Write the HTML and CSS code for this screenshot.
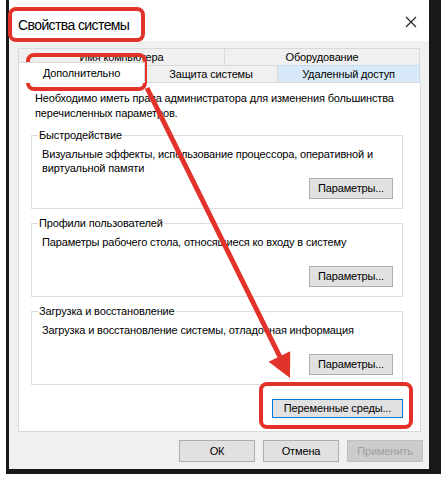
FILE: index.html
```html
<!DOCTYPE html>
<html lang="ru">
<head>
<meta charset="utf-8">
<link rel="stylesheet" href="styles.css">
</head>
<body>
<div class="screen">
  <div class="window">
    <div class="titlebar">
      <span class="title">Свойства системы</span>
      <svg class="close" width="12" height="12" viewBox="0 0 12 12"><path d="M1 1L11 11M11 1L1 11" stroke="#222" stroke-width="1.1"/></svg>
    </div>
    <div class="body">
      <div class="tabs">
        <div class="tab-row back">
          <div class="tab t-name">Имя компьютера</div>
          <div class="tab t-hw">Оборудование</div>
        </div>
        <div class="tab-row front">
          <div class="tab t-adv selected">Дополнительно</div>
          <div class="tab t-prot">Защита системы</div>
          <div class="tab t-remote hover">Удаленный доступ</div>
        </div>
      </div>
      <div class="panel">
        <p class="intro">Необходимо иметь права администратора для изменения большинства перечисленных параметров.</p>
        <fieldset class="group">
          <legend>Быстродействие</legend>
          <p class="desc">Визуальные эффекты, использование процессора, оперативной и виртуальной памяти</p>
          <div class="btn-row"><button class="btn">Параметры...</button></div>
        </fieldset>
        <fieldset class="group">
          <legend>Профили пользователей</legend>
          <p class="desc">Параметры рабочего стола, относящиеся ко входу в систему</p>
          <div class="btn-row"><button class="btn">Параметры...</button></div>
        </fieldset>
        <fieldset class="group">
          <legend>Загрузка и восстановление</legend>
          <p class="desc">Загрузка и восстановление системы, отладочная информация</p>
          <div class="btn-row"><button class="btn">Параметры...</button></div>
        </fieldset>
        <div class="env-row"><button class="btn env">Переменные среды...</button></div>
      </div>
      <div class="footer">
        <button class="btn fbtn">ОК</button>
        <button class="btn fbtn">Отмена</button>
        <button class="btn fbtn disabled">Применить</button>
      </div>
    </div>
  </div>
</div>
<svg class="overlay" width="441" height="478" viewBox="0 0 441 478">
  <g fill="none" stroke="#e2332b" stroke-width="4">
    <rect x="10" y="9" width="133" height="31" rx="6"/>
    <rect x="28" y="55" width="117" height="34" rx="6"/>
    <rect x="261" y="384" width="150" height="43" rx="6"/>
    <line x1="147" y1="88" x2="280" y2="357" stroke-width="5"/>
  </g>
  <polygon points="290,378 290.2,351.2 268.6,361.8" fill="#e2332b"/>
</svg>
</body>
</html>
```
FILE: styles.css
```css
* { box-sizing: border-box; }
html, body { margin: 0; padding: 0; background: #fff; }
body {
  font-family: "Liberation Sans", Arial, sans-serif;
  font-size: 11px;
  letter-spacing: -0.15px;
  color: #000;
  width: 441px;
  height: 478px;
  overflow: hidden;
  position: relative;
}
.screen {
  margin-left: 6px;
  width: 435px;
  height: 474px;
  background: #181818;
  padding-left: 3px;
  display: flex;
}
.window {
  width: 420px;
  height: 469px;
  background: #f0f0f0;
  display: flex;
  flex-direction: column;
}
.titlebar {
  height: 41px;
  background: #fff;
  display: flex;
  align-items: center;
  justify-content: space-between;
  padding: 9px 12px 0 9px;
}
.title {
  font-size: 14px;
  letter-spacing: -0.6px;
  color: #000;
}
.close { margin-top: -6px; }
.body {
  flex: 1;
  padding: 7px 8px 0 9px;
  display: flex;
  flex-direction: column;
}
.tabs { display: flex; flex-direction: column; }
.tab-row { display: flex; height: 17px; }
.tab {
  border: 1px solid #d9d9d9;
  border-bottom: none;
  display: flex;
  align-items: center;
  justify-content: center;
  background: #f0f0f0;
  line-height: 15px;
}
.back .tab + .tab { border-left: none; }
.t-name { width: 207px; }
.t-hw { width: 195px; }
.front .tab + .tab { border-left: none; }
.t-adv { width: 127px; }
.t-prot { width: 133px; }
.t-remote { width: 142px; }
.tab.selected {
  background: #fff;
  height: 21px;
  margin-top: -3px;
  position: relative;
  z-index: 1;
  border-color: #d9d9d9;
}
.tab.hover { background: #d8eaf9; border-color: #c5dcf0; }
.panel {
  height: 350px;
  background: #fff;
  border: 1px solid #d9d9d9;
  padding: 8px 17px 0 12px;
  display: flex;
  flex-direction: column;
}
.intro {
  margin: 0 0 7px 4px;
  line-height: 15px;
}
.group {
  margin: 0 0 7px 0;
  border: 1px solid #dcdcdc;
  padding: 0 9px 9px 10px;
  min-width: 0;
}
.group legend {
  padding: 0 1px;
  margin-left: -4px;
  line-height: 15px;
}
.desc {
  margin: 4px 0 0 0;
  min-height: 28px;
  line-height: 14px;
}
.btn-row { display: flex; justify-content: flex-end; margin-top: 3px; }
.btn {
  font-family: "Liberation Sans", Arial, sans-serif;
  font-size: 11px;
  letter-spacing: -0.15px;
  color: #000;
  background: #e1e1e1;
  border: 1px solid #adadad;
  height: 21px;
  padding: 0;
  width: 84px;
  line-height: 19px;
}
.env-row { display: flex; justify-content: flex-end; margin-top: 7px; }
.btn.env { width: 131px; border-color: #0078d7; height: 19px; line-height: 17px; }
.footer {
  display: flex;
  justify-content: flex-end;
  gap: 8px;
  margin-top: 8px;
  margin-right: -2px;
}
.fbtn { width: 76px; height: 22px; }
.fbtn.disabled { color: #a0a0a0; background: #cccccc; border-color: #bfbfbf; }
.overlay {
  position: absolute;
  left: 0;
  top: 0;
  pointer-events: none;
}
```
